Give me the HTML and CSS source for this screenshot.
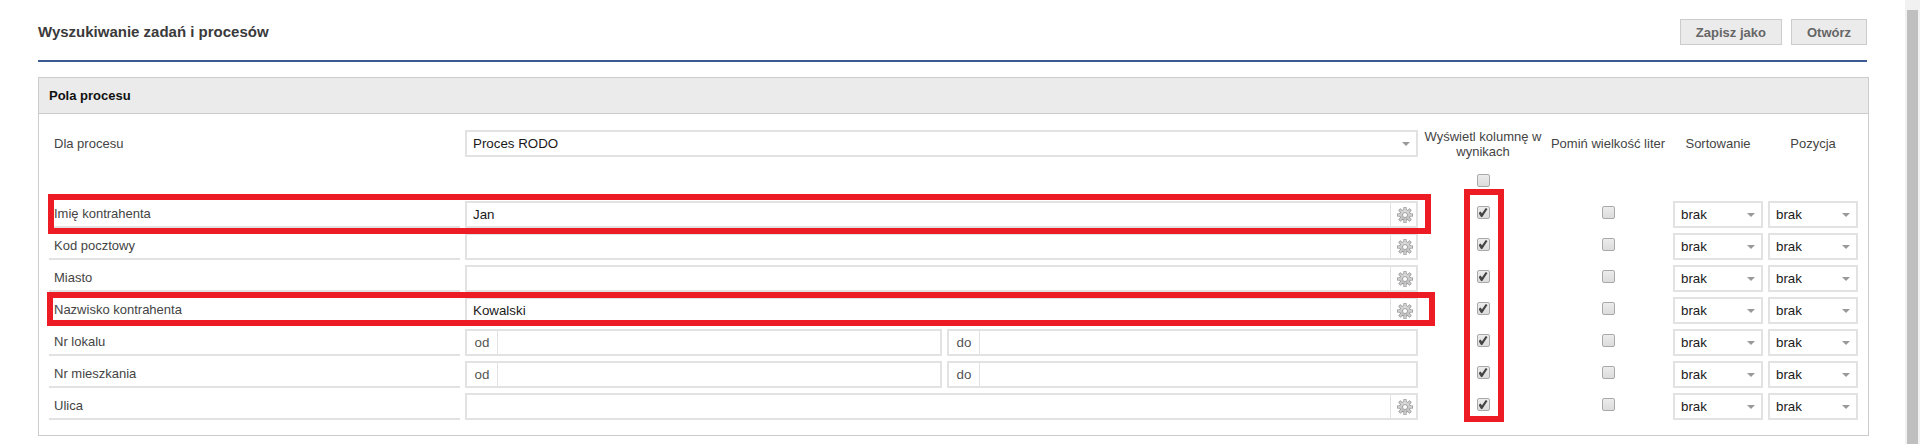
FILE: index.html
```html
<!DOCTYPE html>
<html lang="pl">
<head>
  <meta charset="UTF-8">
  <meta name="viewport" content="width=device-width, initial-scale=1.0">
  <title>Wyszukiwanie zadań i procesów</title>
  <link rel="stylesheet" href="styles.css">
</head>
<body>
  <svg class="defs" width="0" height="0">
    <defs>
      <linearGradient id="gearFill" x1="0" y1="0" x2="0" y2="1">
        <stop offset="0" stop-color="#dedede"/>
        <stop offset="1" stop-color="#b9b9b9"/>
      </linearGradient>
    </defs>
    <symbol id="gear" viewBox="-8 -8 16 16">
      <g stroke="#8d8d8d" stroke-width="3">
        <line x1="-8" x2="8" y1="0" y2="0"/>
        <line x1="-8" x2="8" y1="0" y2="0" transform="rotate(45)"/>
        <line x1="-8" x2="8" y1="0" y2="0" transform="rotate(90)"/>
        <line x1="-8" x2="8" y1="0" y2="0" transform="rotate(135)"/>
      </g>
      <circle r="5.7" fill="#8d8d8d"/>
      <g stroke="#cbcbcb" stroke-width="2">
        <line x1="-7.4" x2="7.4" y1="0" y2="0"/>
        <line x1="-7.4" x2="7.4" y1="0" y2="0" transform="rotate(45)"/>
        <line x1="-7.4" x2="7.4" y1="0" y2="0" transform="rotate(90)"/>
        <line x1="-7.4" x2="7.4" y1="0" y2="0" transform="rotate(135)"/>
      </g>
      <circle r="5" fill="url(#gearFill)"/>
      <circle r="2.5" fill="#fff" stroke="#999" stroke-width="0.9"/>
    </symbol>
  </svg>

  <div class="scrollbar"><div class="scrollbar-thumb"></div></div>

  <div class="page">
    <div class="page-head">
      <h1>Wyszukiwanie zadań i procesów</h1>
      <div class="actions">
        <button class="btn">Zapisz jako</button>
        <button class="btn">Otwórz</button>
      </div>
    </div>

    <div class="panel">
      <div class="panel-title">Pola procesu</div>
      <div class="fields">
        <!-- header row -->
        <div class="label plain">Dla procesu</div>
        <div class="box select"><span>Proces RODO</span><i class="arrow"></i></div>
        <div class="col-head">Wyświetl kolumnę w wynikach</div>
        <div class="col-head">Pomiń wielkość liter</div>
        <div class="col-head">Sortowanie</div>
        <div class="col-head">Pozycja</div>

        <!-- select all -->
        <div class="all-row"><input type="checkbox" class="check"></div>

        <div class="label">Imię kontrahenta</div>
        <div class="box"><span class="value">Jan</span><span class="gear-cell"><svg class="gear"><use href="#gear"/></svg></span></div>
        <div class="cell"><input type="checkbox" class="check" checked></div>
        <div class="cell"><input type="checkbox" class="check"></div>
        <div class="box select"><span>brak</span><i class="arrow"></i></div>
        <div class="box select"><span>brak</span><i class="arrow"></i></div>

        <div class="label">Kod pocztowy</div>
        <div class="box"><span class="value"></span><span class="gear-cell"><svg class="gear"><use href="#gear"/></svg></span></div>
        <div class="cell"><input type="checkbox" class="check" checked></div>
        <div class="cell"><input type="checkbox" class="check"></div>
        <div class="box select"><span>brak</span><i class="arrow"></i></div>
        <div class="box select"><span>brak</span><i class="arrow"></i></div>

        <div class="label">Miasto</div>
        <div class="box"><span class="value"></span><span class="gear-cell"><svg class="gear"><use href="#gear"/></svg></span></div>
        <div class="cell"><input type="checkbox" class="check" checked></div>
        <div class="cell"><input type="checkbox" class="check"></div>
        <div class="box select"><span>brak</span><i class="arrow"></i></div>
        <div class="box select"><span>brak</span><i class="arrow"></i></div>

        <div class="label">Nazwisko kontrahenta</div>
        <div class="box"><span class="value">Kowalski</span><span class="gear-cell"><svg class="gear"><use href="#gear"/></svg></span></div>
        <div class="cell"><input type="checkbox" class="check" checked></div>
        <div class="cell"><input type="checkbox" class="check"></div>
        <div class="box select"><span>brak</span><i class="arrow"></i></div>
        <div class="box select"><span>brak</span><i class="arrow"></i></div>

        <div class="label">Nr lokalu</div>
        <div class="range">
          <div class="box"><span class="addon">od</span><span class="value"></span></div>
          <div class="box"><span class="addon">do</span><span class="value"></span></div>
        </div>
        <div class="cell"><input type="checkbox" class="check" checked></div>
        <div class="cell"><input type="checkbox" class="check"></div>
        <div class="box select"><span>brak</span><i class="arrow"></i></div>
        <div class="box select"><span>brak</span><i class="arrow"></i></div>

        <div class="label">Nr mieszkania</div>
        <div class="range">
          <div class="box"><span class="addon">od</span><span class="value"></span></div>
          <div class="box"><span class="addon">do</span><span class="value"></span></div>
        </div>
        <div class="cell"><input type="checkbox" class="check" checked></div>
        <div class="cell"><input type="checkbox" class="check"></div>
        <div class="box select"><span>brak</span><i class="arrow"></i></div>
        <div class="box select"><span>brak</span><i class="arrow"></i></div>

        <div class="label">Ulica</div>
        <div class="box"><span class="value"></span><span class="gear-cell"><svg class="gear"><use href="#gear"/></svg></span></div>
        <div class="cell"><input type="checkbox" class="check" checked></div>
        <div class="cell"><input type="checkbox" class="check"></div>
        <div class="box select"><span>brak</span><i class="arrow"></i></div>
        <div class="box select"><span>brak</span><i class="arrow"></i></div>
      </div>
    </div>
  </div>

  <!-- red annotations drawn on top of the screenshot -->
  <div class="mark mark-first"></div>
  <div class="mark mark-last"></div>
  <div class="mark mark-col"></div>
</body>
</html>
```

FILE: styles.css
```css
:root {
  --line: #e2e2e2;
  --panel-line: #cccccc;
  --blue: #3b5b92;
  --red: #ed1c24;
}
html, body {
  height: 100%;
}
body {
  margin: 0;
  overflow: hidden;
  background: #fff;
  font-family: "Liberation Sans", Arial, sans-serif;
  font-size: 13px;
  color: #444;
  position: relative;
}
.defs {
  position: absolute;
}
.page {
  width: 1829px;
  margin-left: 38px;
}
.page-head {
  height: 62px;
  box-sizing: border-box;
  padding-top: 19px;
  display: flex;
  justify-content: space-between;
  align-items: flex-start;
  border-bottom: 2px solid var(--blue);
}
h1 {
  margin: 0;
  font-size: 15px;
  line-height: 26px;
  font-weight: bold;
  color: #3a3a3a;
}
.actions {
  display: flex;
  gap: 9px;
}
.btn {
  height: 26px;
  padding: 0 15px;
  border: 1px solid var(--panel-line);
  background: #ebebeb;
  color: #666;
  font-family: inherit;
  font-size: 13px;
  font-weight: bold;
}
.panel {
  margin-top: 15px;
  width: 1831px;
  box-sizing: border-box;
  border: 1px solid var(--panel-line);
}
.panel-title {
  height: 35px;
  line-height: 36px;
  padding-left: 10px;
  background: #ebebeb;
  border-bottom: 1px solid var(--panel-line);
  font-size: 13px;
  font-weight: bold;
  color: #111;
}
.fields {
  display: grid;
  grid-template-columns: 411px 953px 120px 120px 90px 90px;
  grid-template-rows: 27px 34px;
  grid-auto-rows: 27px;
  column-gap: 5px;
  row-gap: 5px;
  padding: 16px 10px 15px;
}
.all-row {
  grid-column: 3;
  display: flex;
  justify-content: center;
  padding-top: 12px;
}
.label {
  grid-column: 1;
  box-sizing: border-box;
  border-bottom: 2px solid var(--line);
  padding-left: 5px;
  line-height: 25px;
}
.label.plain {
  border-bottom: none;
  line-height: 27px;
}
.box {
  box-sizing: border-box;
  display: flex;
  align-items: center;
  min-width: 0;
  border: 2px solid var(--line);
  background: #fff;
  color: #1a1a1a;
  font-size: 13.33px;
}
.select {
  padding-left: 6px;
  position: relative;
}
.arrow {
  position: absolute;
  right: 6px;
  top: 10px;
  border-left: 4.5px solid transparent;
  border-right: 4.5px solid transparent;
  border-top: 4.5px solid #999;
}
.value {
  flex: 1;
  padding-left: 6px;
}
.gear-cell {
  width: 26px;
  height: 100%;
  box-sizing: border-box;
  padding-left: 2px;
  border-left: 1px solid var(--line);
  display: flex;
  align-items: center;
  justify-content: center;
}
.gear {
  width: 16px;
  height: 16px;
}
.range {
  display: grid;
  grid-template-columns: 477px 1fr;
  column-gap: 5px;
}
.addon {
  width: 31px;
  height: 100%;
  flex: none;
  box-sizing: border-box;
  border-right: 1px solid var(--line);
  text-align: center;
  line-height: 23px;
  color: #555;
}
.col-head {
  display: flex;
  align-items: center;
  justify-content: center;
  text-align: center;
  line-height: 15px;
}
.cell {
  display: flex;
  justify-content: center;
  padding-top: 5px;
}
.check {
  appearance: none;
  -webkit-appearance: none;
  margin: 0;
  width: 13px;
  height: 13px;
  box-sizing: border-box;
  border: 1px solid #a9a9a9;
  border-radius: 2px;
  background: linear-gradient(#ececec, #dcdcdc);
  display: block;
  position: relative;
}
.check:checked::before {
  content: "";
  position: absolute;
  left: 1px;
  top: 1px;
  width: 9px;
  height: 9px;
  background: #444;
  clip-path: polygon(0 55%, 25% 40%, 38% 62%, 80% 0, 100% 10%, 42% 100%, 28% 100%);
}

/* scrollbar strip at the right edge */
.scrollbar {
  position: absolute;
  top: 0;
  right: 0;
  width: 15px;
  height: 100%;
  background: #f1f1f1;
}
.scrollbar-thumb {
  position: absolute;
  left: 2px;
  right: 2px;
  top: 10px;
  bottom: 0;
  background: #bfbfbf;
}

.mark {
  position: absolute;
  box-sizing: border-box;
  border: 6px solid var(--red);
}
.mark-first {
  left: 48px;
  top: 194px;
  width: 1383px;
  height: 40px;
}
.mark-last {
  left: 47px;
  top: 292px;
  width: 1388px;
  height: 34px;
}
.mark-col {
  left: 1464px;
  top: 189px;
  width: 40px;
  height: 233px;
}
```
